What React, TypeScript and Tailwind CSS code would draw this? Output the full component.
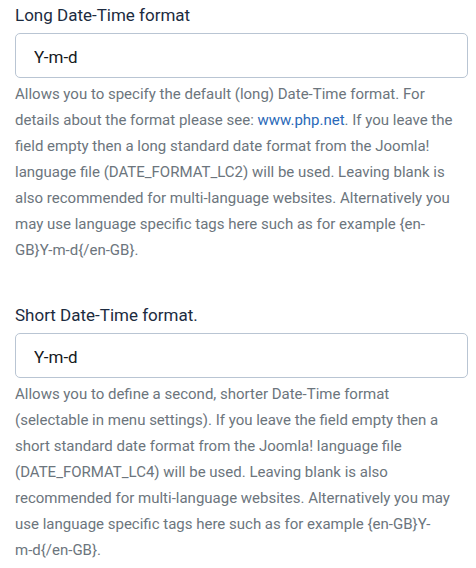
import React from 'react';

interface FieldProps {
  label: string;
  value: string;
  children: React.ReactNode;
}

function Field({ label, value, children }: FieldProps) {
  return (
    <div className="flex flex-col">
      <label className="text-[17px] leading-6 text-[#1c2b40]">{label}</label>
      <input
        readOnly
        value={value}
        className="mt-[6px] h-[45px] w-[453px] rounded-[5px] border border-[#b9c5d3] bg-white pl-[18px] pt-[2px] text-[17px] text-[#161a1d] outline-none"
      />
      <p className="mt-[3px] w-[443px] text-[15px] leading-[26px] text-[#6c757d]">{children}</p>
    </div>
  );
}

export default function App() {
  return (
    <div className="w-[476px] h-[568px] overflow-hidden bg-white pl-[15px] pt-[3px] font-['Roboto',sans-serif]">
      <div className="flex flex-col gap-[40px]">
        <Field label="Long Date-Time format" value="Y-m-d">
          Allows you to specify the default (long) Date-Time format. For details about the format
          please see: <a className="text-[#2a69b8]">www.php.net</a>. If you leave the field empty
          then a long standard date format from the Joomla! language file (DATE_FORMAT_LC2) will be
          used. Leaving blank is also recommended for multi-language websites. Alternatively you may
          use language specific tags here such as for example {'{en-GB}Y-m-d{/en-GB}'}.
        </Field>
        <Field label="Short Date-Time format." value="Y-m-d">
          Allows you to define a second, shorter Date-Time format (selectable in menu settings). If
          you leave the field empty then a short standard date format from the Joomla! language
          file (DATE_FORMAT_LC4) will be used. Leaving blank is also recommended for multi-language
          websites. Alternatively you may use language specific tags here such as for example{' '}
          {'{en-GB}Y-'}
          <span className="whitespace-nowrap">{'m-d{/en-GB}.'}</span>
        </Field>
      </div>
    </div>
  );
}
